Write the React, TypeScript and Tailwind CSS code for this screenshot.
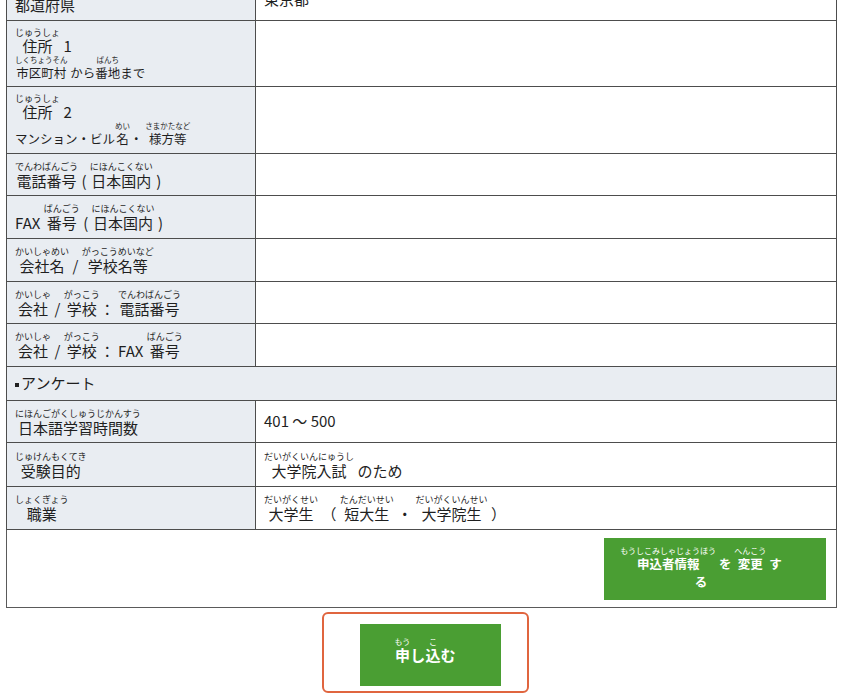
import type { ReactNode } from "react";

// ruby drawn as an inline-block so the base stays centred and unspaced
function Rb({ base, ruby, rtClass = "text-[9px] leading-[11px]" }: { base: string; ruby: string; rtClass?: string }) {
  return (
    <span className="inline-block text-center">
      <span className={`block whitespace-nowrap ${rtClass}`}>{ruby}</span>
      {base}
    </span>
  );
}

const smallRt = "text-[7.5px] leading-[10px]";
const labelCell =
  "border border-[#4d4d4d] bg-[#e9edf2] pl-[8px] pr-2 align-middle text-[15px] text-[#1f1f1f]";
const valueCell = "border border-[#4d4d4d] bg-white pl-[8px] align-middle text-[15px] text-[#1f1f1f]";

function Row({ h, label, value }: { h: string; label: ReactNode; value?: ReactNode }) {
  return (
    <tr>
      <td className={`${labelCell} ${h}`}>{label}</td>
      <td className={valueCell}>{value}</td>
    </tr>
  );
}

export default function App() {
  return (
    <div
      className="-mt-[22px] min-h-[720px] w-[844px] bg-white pl-[6px]"
      style={{ fontFamily: '"Noto Sans CJK JP", "Noto Sans", sans-serif' }}
    >
      <table className="w-[831px] table-fixed border-collapse border border-[#5a5a5a]">
        <colgroup>
          <col className="w-[249px]" />
          <col />
        </colgroup>
        <tbody>
          <Row
            h="h-[42px]"
            label={<div className="leading-[18px]"><Rb base="都道府県" ruby="とどうふけん" /></div>}
            value="東京都"
          />
          <Row
            h="h-[66px]"
            label={
              <div className="leading-[16px]">
                <div>
                  <Rb base="住所" ruby="じゅうしょ" /> 1
                </div>
                <div className="mt-[1px] text-[12.5px]">
                  <Rb base="市区町村" ruby="しくちょうそん" rtClass={smallRt} /> から
                  <Rb base="番地" ruby="ばんち" rtClass={smallRt} />まで
                </div>
              </div>
            }
          />
          <Row
            h="h-[67px]"
            label={
              <div className="leading-[16px]">
                <div>
                  <Rb base="住所" ruby="じゅうしょ" /> 2
                </div>
                <div className="mt-[1px] text-[12.5px]">
                  マンション・ビル<Rb base="名" ruby="めい" rtClass={smallRt} />・{" "}
                  <Rb base="様方等" ruby="さまかたなど" rtClass={smallRt} />
                </div>
              </div>
            }
          />
          <Row
            h="h-[42px]"
            label={
              <div className="leading-[17px]">
                <Rb base="電話番号" ruby="でんわばんごう" /> ( <Rb base="日本国内" ruby="にほんこくない" /> )
              </div>
            }
          />
          <Row
            h="h-[43px]"
            label={
              <div className="leading-[17px]">
                FAX <Rb base="番号" ruby="ばんごう" /> ( <Rb base="日本国内" ruby="にほんこくない" /> )
              </div>
            }
          />
          <Row
            h="h-[43px]"
            label={
              <div className="leading-[17px]">
                <Rb base="会社名" ruby="かいしゃめい" /> / <Rb base="学校名等" ruby="がっこうめいなど" />
              </div>
            }
          />
          <Row
            h="h-[42px]"
            label={
              <div className="leading-[17px]">
                <Rb base="会社" ruby="かいしゃ" /> / <Rb base="学校" ruby="がっこう" />： <Rb base="電話番号" ruby="でんわばんごう" />
              </div>
            }
          />
          <Row
            h="h-[43px]"
            label={
              <div className="leading-[17px]">
                <Rb base="会社" ruby="かいしゃ" /> / <Rb base="学校" ruby="がっこう" />： FAX <Rb base="番号" ruby="ばんごう" />
              </div>
            }
          />
          <tr>
            <td colSpan={2} className={`${labelCell} h-[34px]`}>
              <span className="mr-[2px] inline-block h-[4px] w-[4px] bg-[#222] align-middle" />
              アンケート
            </td>
          </tr>
          <Row
            h="h-[42px]"
            label={
              <div className="leading-[17px]">
                <Rb base="日本語学習時間数" ruby="にほんごがくしゅうじかんすう" />
              </div>
            }
            value="401 ～ 500"
          />
          <Row
            h="h-[44px]"
            label={
              <div className="leading-[17px]">
                <Rb base="受験目的" ruby="じゅけんもくてき" />
              </div>
            }
            value={
              <div className="leading-[17px]">
                <Rb base="大学院入試" ruby="だいがくいんにゅうし" /> のため
              </div>
            }
          />
          <Row
            h="h-[43px]"
            label={
              <div className="leading-[17px]">
                <Rb base="職業" ruby="しょくぎょう" />
              </div>
            }
            value={
              <div className="leading-[17px]">
                <Rb base="大学生" ruby="だいがくせい" /> （ <Rb base="短大生" ruby="たんだいせい" /> ・{" "}
                <Rb base="大学院生" ruby="だいがくいんせい" /> ）
              </div>
            }
          />
          <tr>
            <td colSpan={2} className="h-[78px] border border-[#5a5a5a] bg-white pr-[10px] align-middle">
              <div className="flex justify-end">
                <button
                  type="button"
                  className="flex h-[62px] w-[222px] items-center justify-center bg-[#4a9e33] pr-[28px] text-[12.5px] font-bold leading-[18px] text-white"
                >
                  <span className="whitespace-nowrap text-center">
                    <Rb base="申込者情報" ruby="もうしこみしゃじょうほう" rtClass="text-[8px] leading-[9px] font-normal" /> を{" "}
                    <Rb base="変更" ruby="へんこう" rtClass="text-[8px] leading-[9px] font-normal" /> す
                    <br />る
                  </span>
                </button>
              </div>
            </td>
          </tr>
        </tbody>
      </table>

      <div className="flex justify-center pt-[4px]">
        <div className="rounded-[6px] border-[2.5px] border-[#e0653f] pb-[5px] pl-[36px] pr-[26px] pt-[10px]">
          <button
            type="button"
            className="flex h-[62px] w-[141px] items-center justify-center bg-[#4a9e33] pb-[10px] pr-[10px] text-[15px] font-bold leading-[17px] text-white"
          >
            <span>
              <Rb base="申" ruby="もう" rtClass="text-[8px] leading-[9px] font-normal" />し
              <Rb base="込" ruby="こ" rtClass="text-[8px] leading-[9px] font-normal" />む
            </span>
          </button>
        </div>
      </div>
    </div>
  );
}
